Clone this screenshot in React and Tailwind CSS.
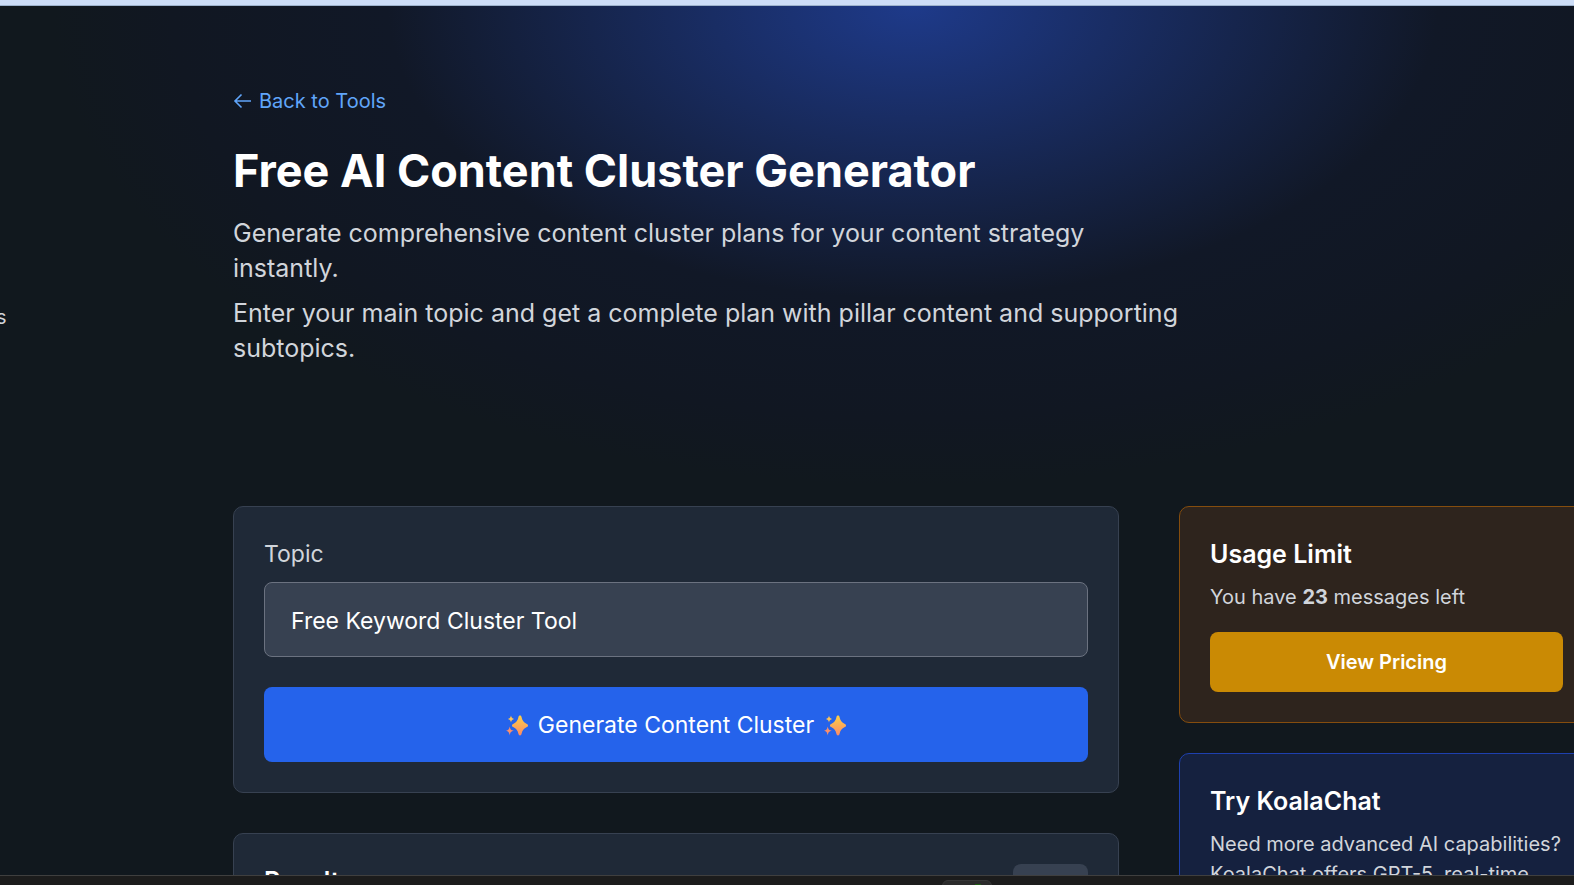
import React, { useState } from 'react';

function Sparkles() {
  return (
    <svg className="w-[22px] h-[22px] shrink-0" viewBox="0 0 22 22" aria-hidden="true">
      <defs>
        <linearGradient id="sparkle" x1="0" y1="0" x2="0" y2="1">
          <stop offset="0" stopColor="#fdd045" />
          <stop offset="1" stopColor="#fb8a66" />
        </linearGradient>
      </defs>
      <path fill="url(#sparkle)" d="M14 .5c.9 0 1.300.6 1.500 1.400.9 3.700 2.100 5.600 5.400 7 .8.4 1.100.9 1.100 1.600s-.3 1.200-1.100 1.600c-3.300 1.400-4.500 3.300-5.400 7-.2.8-.6 1.400-1.500 1.400s-1.300-.6-1.500-1.400c-.9-3.700-2.100-5.600-5.400-7-.8-.4-1.100-.9-1.100-1.600s.3-1.200 1.100-1.600c3.300-1.400 4.500-3.300 5.400-7 .2-.8.600-1.400 1.500-1.400z" />
      <path fill="#fdc45a" d="M5 .5c.5 2.200 1.100 2.900 3.200 3.500C6.100 4.600 5.500 5.300 5 7.500 4.500 5.300 3.900 4.600 1.800 4 3.900 3.400 4.500 2.700 5 .5z" />
      <path fill="#fb8f6c" d="M3.700 11.500c.6 2.900 1.300 3.700 4.100 4.300-2.800.6-3.500 1.400-4.100 4.700-.6-3.300-1.200-4.100-3.700-4.700 2.500-.6 3.100-1.400 3.700-4.300z" />
    </svg>
  );
}

function BackArrow() {
  return (
    <svg className="w-[18px] h-[18px] shrink-0" viewBox="0 0 18 18" fill="none" stroke="currentColor" strokeWidth="1.6" aria-hidden="true">
      <path d="M18 9H2.500M8.500 2.500 2 9l6.500 6.500" />
    </svg>
  );
}

export default function App() {
  const [topic, setTopic] = useState('Free Keyword Cluster Tool');

  return (
    <div className="h-screen flex flex-col overflow-hidden bg-[#11181e] text-white font-['Inter','Noto_Sans',sans-serif]">
      <div className="h-[6px] shrink-0 bg-[#cdddf7] border-b border-[#9db2cc]" />

      <div className="flex-1 min-h-0 flex overflow-hidden bg-[radial-gradient(ellipse_860px_480px_at_58%_0%,#1e3a8a_0%,#111827_61%,#111722_86%,#11181e_100%)]">
        {/* Sidebar, scrolled mostly out of view */}
        <aside className="w-[233px] shrink-0 pt-[296px]">
          <span className="block text-[20px] leading-[30px] text-[#d1d5db] -ml-1">s</span>
        </aside>

        <main className="flex-1 min-w-0 -mr-5 pt-20">
          {/* Page header */}
          <header className="max-w-[960px] mb-[140px]">
            <a href="#tools" className="flex items-center gap-2 w-max mb-[30px] text-[20px] leading-[30px] text-[#60a5fa]">
              <BackArrow />
              Back to Tools
            </a>
            <h1 className="mb-5 text-[45px] leading-[50px] font-bold">Free AI Content Cluster Generator</h1>
            <p className="mb-2.5 text-[25px] leading-[35px] text-[#d1d5db]">
              Generate comprehensive content cluster plans for your content strategy instantly.
            </p>
            <p className="text-[25px] leading-[35px] text-[#d1d5db]">
              Enter your main topic and get a complete plan with pillar content and supporting subtopics.
            </p>
          </header>

          <div className="flex items-start gap-[60px]">
            <div className="flex-1 min-w-0 space-y-10">
              {/* Generator form */}
              <form
                onSubmit={(e) => e.preventDefault()}
                className="bg-[#1f2937] border border-[#374151] rounded-[10px] p-[30px]"
              >
                <label htmlFor="topic" className="block mb-2.5 text-[23px] leading-[35px] text-[#d1d5db]">Topic</label>
                <input
                  id="topic"
                  value={topic}
                  onChange={(e) => setTopic(e.target.value)}
                  className="block w-full h-[75px] mb-[30px] px-[26px] pt-0.5 text-[23px] bg-[#374151] border border-[#6b7280] rounded-[8px] text-white outline-none"
                />
                <button type="submit" className="w-full h-[75px] pt-0.5 flex items-center justify-center gap-2.5 bg-[#2563eb] rounded-[8px] text-[23px]">
                  <Sparkles />
                  Generate Content Cluster
                  <Sparkles />
                </button>
              </form>

              {/* Results */}
              <section className="bg-[#1f2937] border border-[#374151] rounded-[10px] p-[30px]">
                <div className="flex items-start justify-between">
                  <h2 className="text-[25px] leading-[35px] font-semibold">Results</h2>
                  <button type="button" aria-label="Copy" className="w-[75px] h-10 bg-[#374151] rounded-[8px]" />
                </div>
              </section>
            </div>

            <div className="w-[415px] shrink-0 space-y-[30px]">
              <section className="bg-[#2e241d] border border-[#854d0e] rounded-[10px] p-[30px]">
                <h2 className="mb-2.5 text-[25px] leading-[35px] font-semibold">Usage Limit</h2>
                <p className="mb-5 text-[20px] leading-[30px] text-[#d1d5db]">
                  You have <strong className="font-bold">23</strong> messages left
                </p>
                <button type="button" className="w-full h-[60px] bg-[#ca8a04] rounded-[8px] text-[20px] font-semibold">
                  View Pricing
                </button>
              </section>

              <section className="bg-[#15213f] border border-[#1e40af] rounded-[10px] p-[30px]">
                <h2 className="mb-2.5 text-[25px] leading-[35px] font-semibold">Try KoalaChat</h2>
                <p className="text-[20px] leading-[30px] text-[#d1d5db]">
                  Need more advanced AI capabilities? KoalaChat offers GPT-5, real-time
                </p>
              </section>
            </div>
          </div>
        </main>
      </div>

      {/* Bottom bar */}
      <footer className="h-[10px] shrink-0 bg-[#1c1c1c] border-t border-[#3f3f3f] pt-1 pl-[942px] overflow-hidden">
        <div className="w-[50px] h-5 bg-[#2b2b2b] border border-[#363636] rounded-[6px] pt-[3px] pl-8">
          <div className="w-[6px] h-2 bg-[#1f5c14]" />
        </div>
      </footer>
    </div>
  );
}
